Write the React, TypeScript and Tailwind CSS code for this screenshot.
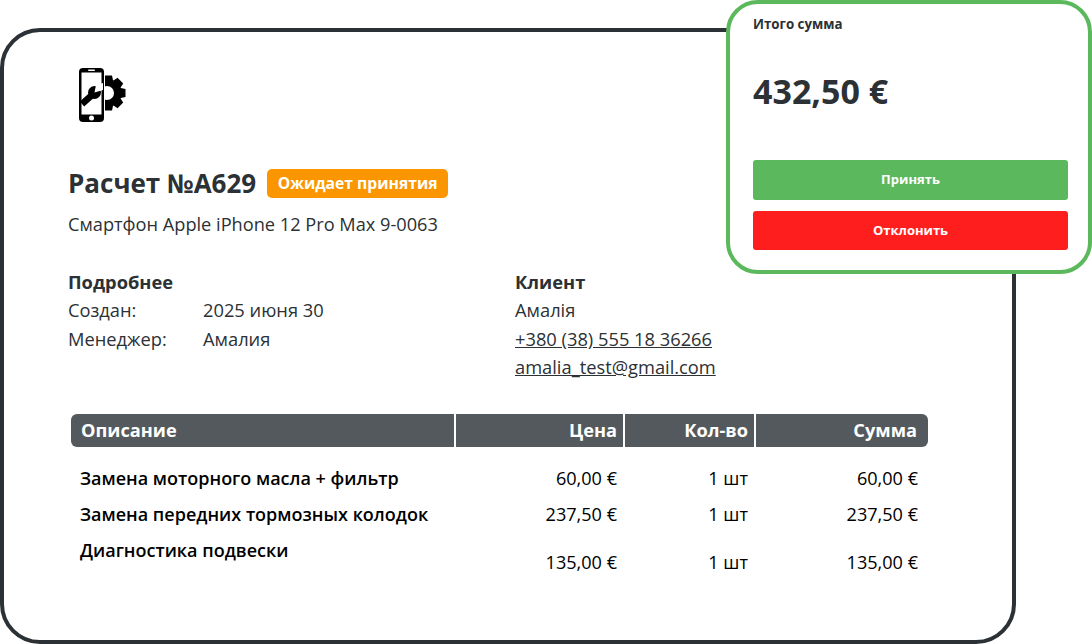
const rows = [
  { name: "Замена моторного масла + фильтр", price: "60,00 €", qty: "1 шт", sum: "60,00 €", cls: "h-[36px] items-center" },
  { name: "Замена передних тормозных колодок", price: "237,50 €", qty: "1 шт", sum: "237,50 €", cls: "h-[36px] items-center" },
  { name: "Диагностика подвески", price: "135,00 €", qty: "1 шт", sum: "135,00 €", cls: "h-[60px] items-center" },
];

const gearTeeth = [0, 45, 90, 135, 180, 225, 270, 315];

const Logo = () => (
  <svg width="50" height="56" viewBox="0 0 50 56" className="ml-[10px]">
    {/* gear */}
    {gearTeeth.map((a) => (
      <path key={a} d="M26 8.500h8l1.500 7h-11z" fill="#000" transform={`rotate(${a} 30 26)`} />
    ))}
    <circle cx="30" cy="26" r="13.500" fill="#000" />
    <circle cx="29" cy="26" r="7" fill="#fff" />
    {/* phone */}
    <rect x="0" y="1" width="27" height="54" rx="4" fill="#fff" />
    <rect x="1" y="1" width="25" height="54" rx="4" fill="#000" />
    <rect x="3.500" y="5.500" width="20" height="42" fill="#fff" />
    <rect x="10" y="2.600" width="7" height="1.400" rx="0.7" fill="#fff" />
    <circle cx="13.500" cy="51" r="2.500" fill="#fff" />
    {/* wrench */}
    <line x1="4" y1="37" x2="14" y2="28" stroke="#000" strokeWidth="6.500" />
    <circle cx="16.500" cy="25.500" r="6.500" fill="#000" />
    <path d="M16.500 25.500L18 18 25 16 25 23z" fill="#fff" />
  </svg>
);

export default function App() {
  return (
    <div className="relative w-[1092px] h-[644px] overflow-hidden bg-white font-['Open_Sans',sans-serif] text-[#2b3135]">
      <div className="mt-[28px] w-[1016px] h-[616px] border-4 border-[#2b3135] rounded-[40px] pl-[64px] pr-[84px] pt-[35px]">
        <Logo />

        <div className="mt-[44px] flex items-center gap-[11px] h-[32px]">
          <h1 className="text-[26px] font-bold leading-[32px]">Расчет №A629</h1>
          <span className="h-[29px] px-[10.5px] rounded-[5px] bg-[#fb9600] text-white text-[15.7px] font-bold leading-[28px]">
            Ожидает принятия
          </span>
        </div>
        <p className="mt-[13px] text-[18.2px] leading-[24px]">Смартфон Apple iPhone 12 Pro Max 9-0063</p>

        <div className="mt-[31.600px] flex text-[18.3px] leading-[28.5px]">
          <div className="w-[447px]">
            <div className="font-bold">Подробнее</div>
            <div className="flex">
              <span className="w-[135px]">Создан:</span>
              <span>2025 июня 30</span>
            </div>
            <div className="flex">
              <span className="w-[135px]">Менеджер:</span>
              <span>Амалия</span>
            </div>
          </div>
          <div>
            <div className="font-bold">Клиент</div>
            <div>Амалія</div>
            <div className="underline">+380 (38) 555 18 36266</div>
            <div className="underline">amalia_test@gmail.com</div>
          </div>
        </div>

        <div className="mt-[32.400px] ml-[3px] w-[857px]">
          <div className="grid grid-cols-[383px_167px_129px_172px] gap-x-[2px] text-[18.2px] font-bold text-white leading-[33px]">
            <div className="h-[33px] bg-[#54595d] rounded-l-[6px] pl-[10px]">Описание</div>
            <div className="h-[33px] bg-[#54595d] text-right pr-[6px]">Цена</div>
            <div className="h-[33px] bg-[#54595d] text-right pr-[6px]">Кол-во</div>
            <div className="h-[33px] bg-[#54595d] rounded-r-[6px] text-right pr-[11px]">Сумма</div>
          </div>
          <div className="mt-[13px] text-black text-[18.100px] leading-[24px]">
            {rows.map((r, i) => (
              <div key={r.name} className={`grid grid-cols-[383px_167px_129px_172px] gap-x-[2px] ${r.cls}`}>
                <div className={`pl-[9px] text-[18px] font-semibold ${i === 2 ? "-mt-[24px]" : ""}`}>{r.name}</div>
                <div className="text-right pr-[6px]">{r.price}</div>
                <div className="text-right pr-[6px]">{r.qty}</div>
                <div className="text-right pr-[10px]">{r.sum}</div>
              </div>
            ))}
          </div>
        </div>
      </div>

      <div className="absolute left-[726px] top-0 w-[366px] h-[274px] bg-white border-4 border-[#5cb85c] rounded-[32px] pl-[23px] pr-[20px] pt-[12px]">
        <div className="text-[13.3px] font-bold leading-[16px]">Итого сумма</div>
        <div className="mt-[37px] text-[34px] font-bold leading-[44px]">432,50 €</div>
        <button className="mt-[47px] w-full h-[40px] rounded-[3px] bg-[#5cb85c] text-white text-[13px] font-bold">Принять</button>
        <button className="mt-[11px] w-full h-[39px] rounded-[3px] bg-[#ff1e1e] text-white text-[13px] font-bold">Отклонить</button>
      </div>
    </div>
  );
}
